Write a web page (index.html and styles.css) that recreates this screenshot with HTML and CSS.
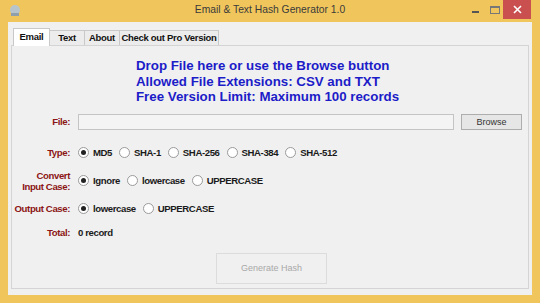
FILE: index.html
```html
<!DOCTYPE html>
<html lang="en">
<head>
<meta charset="UTF-8">
<title>Email &amp; Text Hash Generator 1.0</title>
<link rel="stylesheet" href="styles.css">
</head>
<body>

<!-- Window frame -->
<div class="window">

<div class="title-bar">
<svg class="app-icon" width="14" height="14" viewBox="0 0 14 14">
<circle cx="7" cy="6" r="5" fill="#b8c4cc"/>
<rect x="3" y="9" width="8" height="3" fill="#8fa0ac"/>
</svg>
<span class="title">Email &amp; Text Hash Generator 1.0</span>
<div class="controls">
<span class="ctl-min"></span>
<span class="ctl-max"></span>
<span class="ctl-close">
<svg width="9" height="9" viewBox="0 0 9 9"><path d="M1 1L8 8M8 1L1 8" stroke="#fff" stroke-width="1.6"/></svg>
</span>
</div>
</div>

<div class="client">

<!-- Tabs -->
<div class="tabs">
<span class="tab active tab-email">Email</span>
<span class="tab tab-text">Text</span>
<span class="tab tab-about">About</span>
<span class="tab tab-pro">Check out Pro Version</span>
</div>

<div class="panel">

<div class="notice">
Drop File here or use the Browse button<br>
Allowed File Extensions: CSV and TXT<br>
Free Version Limit: Maximum 100 records
</div>

<div class="row row-file">
<span class="label">File:</span>
<div class="file-box"></div>
<button class="btn-browse">Browse</button>
</div>

<div class="row row-type">
<span class="label">Type:</span>
<label class="opt"><span class="radio checked"></span>MD5</label>
<label class="opt"><span class="radio"></span>SHA-1</label>
<label class="opt"><span class="radio"></span>SHA-256</label>
<label class="opt"><span class="radio"></span>SHA-384</label>
<label class="opt"><span class="radio"></span>SHA-512</label>
</div>

<div class="row row-convert">
<span class="label">Convert<br>Input Case:</span>
<label class="opt"><span class="radio checked"></span>Ignore</label>
<label class="opt"><span class="radio"></span>lowercase</label>
<label class="opt"><span class="radio"></span>UPPERCASE</label>
</div>

<div class="row row-output">
<span class="label">Output Case:</span>
<label class="opt"><span class="radio checked"></span>lowercase</label>
<label class="opt"><span class="radio"></span>UPPERCASE</label>
</div>

<div class="row row-total">
<span class="label">Total:</span>
<span class="value">0 record</span>
</div>

<button class="btn-generate" disabled>Generate Hash</button>

</div>
</div>
</div>

</body>
</html>
```

FILE: styles.css
```css
body {
margin: 0;
font-family: "Liberation Sans", Arial, sans-serif;
}


.window {
width: 540px;
height: 303px;
background-color: #f0c65c;
display: flex;
flex-direction: column;
}


.title-bar {
height: 22px;
display: flex;
align-items: center;
position: relative;
}


.app-icon {
margin-left: 8px;
}


.title {
position: absolute;
left: 0;
right: 0;
text-align: center;
top: 4px;
font-family: "Liberation Sans", Arial, sans-serif;
font-size: 10.3px;
color: #3a3a3a;
}


.controls {
margin-left: auto;
margin-right: 9px;
display: flex;
align-items: flex-start;
align-self: flex-start;
}


.ctl-min {
width: 7px;
height: 2px;
background-color: #555;
margin-top: 11px;
margin-right: 11px;
}


.ctl-max {
width: 8px;
height: 5px;
border: 1px solid #777;
border-top-width: 2px;
margin-top: 6px;
margin-right: 3px;
}


.ctl-close {
width: 28px;
height: 19px;
background-color: #c9504f;
display: flex;
align-items: center;
justify-content: center;
}


.client {
margin: 0 8px 8px 8px;
flex: 1;
background-color: #f0f0f0;
padding: 7px 3px 6px 3px;
display: flex;
flex-direction: column;
}


.tabs {
display: flex;
align-items: flex-end;
height: 16px;
padding-left: 2px;
position: relative;
z-index: 1;
}


.tab {
font-size: 9.5px;
font-weight: bold;
letter-spacing: -0.3px;
text-align: center;
color: #111;
height: 14px;
line-height: 14px;
border: 1px solid #c9c9c9;
border-bottom: none;
margin-left: -1px;
background-color: #ececec;
}


.tab.active {
height: 17px;
line-height: 16px;
background-color: #fff;
margin-bottom: -1px;
}


.tab-email {
width: 35px;
margin-left: 0;
}


.tab-text {
width: 34px;
}


.tab-about {
width: 34px;
}


.tab-pro {
width: 98px;
}


.panel {
flex: 1;
border: 1px solid #d4d4d4;
background-color: #f0f0f0;
}


.notice {
margin: 12px 0 0 124px;
font-size: 13.3px;
font-weight: bold;
line-height: 15.5px;
color: #1c1cc8;
}


.row {
display: flex;
align-items: center;
font-size: 9.6px;
font-weight: bold;
letter-spacing: -0.4px;
color: #1a1a1a;
white-space: nowrap;
}


.label {
width: 58px;
margin-right: 8px;
text-align: right;
color: #8c1515;
line-height: 11px;
}


.row-file {
margin-top: 9px;
height: 16px;
}


.file-box {
width: 374px;
height: 14px;
border: 1px solid #c4c4c4;
background-color: #f4f4f4;
}


.btn-browse {
margin-left: 7px;
width: 61px;
height: 16px;
padding: 0;
font-family: "Liberation Sans", Arial, sans-serif;
font-size: 9px;
color: #333;
background-color: #e6e6e6;
border: 1px solid #adadad;
}


.row-type {
margin-top: 15px;
height: 16px;
}


.row-convert {
margin-top: 9px;
height: 22px;
}


.row-output {
margin-top: 9px;
height: 16px;
}


.row-total {
margin-top: 8px;
height: 16px;
}


.opt {
display: flex;
align-items: center;
margin-right: 7px;
}


.radio {
width: 9px;
height: 9px;
border: 1px solid #9a9a9a;
border-radius: 50%;
background-color: #fff;
margin-right: 4px;
display: flex;
align-items: center;
justify-content: center;
}


.radio.checked::after {
content: "";
width: 5px;
height: 5px;
border-radius: 50%;
background-color: #222;
}


.btn-generate {
display: block;
margin: 12px 0 0 204px;
width: 111px;
height: 31px;
padding: 0;
font-family: "Liberation Sans", Arial, sans-serif;
font-size: 9px;
color: #a8a8a8;
background-color: #f0f0f0;
border: 1px solid #dcdcdc;
}
```
